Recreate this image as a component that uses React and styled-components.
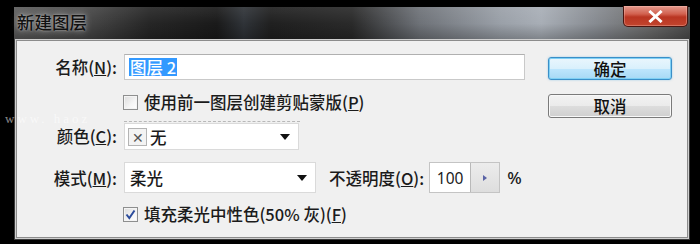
import React from "react";
import styled, { createGlobalStyle } from "styled-components";

const Global = createGlobalStyle`
  html, body { margin: 0; padding: 0; background: #000; }
  body { width: 700px; height: 244px; overflow: hidden; font-family: "Noto Sans CJK SC", "Noto Sans", sans-serif; }
`;

const Window = styled.div`
  position: relative;
  margin: 7px 0 0 14px;
  width: 676px;
  background: #3a3a3a;
  display: flex;
  flex-direction: column;
`;

const TitleBar = styled.div`
  height: 33px;
  display: flex;
  align-items: flex-start;
  justify-content: space-between;
  background:
    linear-gradient(180deg, rgba(255,255,255,0.08) 0%, rgba(0,0,0,0) 50%, rgba(0,0,0,0.25) 100%),
    linear-gradient(90deg, #5c5c5c 0%, #4a4a4a 10%, #262626 20%, #1a1a1a 30%, #2f3338 34%, #202020 38%, #2a2a2a 50%, #6e7278 60%, #9aa0a8 72%, #a8aeb6 78%, #878b91 86%, #6a6a6a 94%, #4c4c4c 100%);
`;

const Title = styled.div`
  margin: 4px 0 0 3px;
  font-size: 17.5px;
  font-weight: 500;
  line-height: 22px;
  color: #111;
  text-shadow: 0 0 6px rgba(210,210,210,0.75), 0 0 2px rgba(220,220,220,0.6);
`;

const CloseBtn = styled.div`
  margin: -1px 2px 0 0;
  width: 63px;
  height: 20px;
  border: 1px solid #4a1510;
  border-top: none;
  border-radius: 0 0 5px 5px;
  background: linear-gradient(180deg, #e39a8e 0%, #d2614f 40%, #b93522 55%, #c2452e 100%);
  box-shadow: inset 0 0 0 1px rgba(255,200,190,0.35);
  display: flex;
  align-items: center;
  justify-content: center;
`;

const Panel = styled.div`
  margin: 0 2px 2px;
  background: #f0f0f0;
  border: 1px solid #8c8c8c;
  box-shadow: 0 0 0 1px #cfcfcf;
  display: flex;
  padding-bottom: 13px;
`;

const Form = styled.div`
  width: 508px;
  display: flex;
  flex-direction: column;
`;

const Row = styled.div`
  display: flex;
  align-items: center;
  margin-top: ${(p) => p.$mt}px;
  height: ${(p) => p.$h}px;
  font-size: 16.5px;
  font-weight: 500;
  color: #1b1b1b;
`;

const Label = styled.div`
  width: 100px;
  text-align: right;
  margin-right: 7px;
  white-space: nowrap;
  line-height: 20px;
  flex: none;
`;

const TextInput = styled.div`
  width: 401px;
  height: 26px;
  box-sizing: border-box;
  background: #fff;
  border: 1px solid #c9c9c9;
  border-top-color: #b0b0b0;
  display: flex;
  align-items: center;
  padding-left: 4px;
`;

const Selected = styled.span`
  background: #3399ff;
  color: #fff;
  line-height: 18px;
  padding: 0 1px;
`;

const CheckLine = styled.label`
  display: flex;
  align-items: center;
  margin-left: 106px;
  line-height: 20px;
  white-space: nowrap;
`;

const Box = styled.span`
  width: 15px;
  height: 15px;
  box-sizing: border-box;
  border: 1px solid #8e8f8f;
  background: linear-gradient(135deg, #dcdcdc 0%, #f5f5f5 60%, #fff 100%);
  box-shadow: inset 0 0 0 1px #f4f4f4;
  margin-right: 6px;
  display: flex;
  align-items: center;
  justify-content: center;
  flex: none;
`;

const DashWrap = styled.div`
  border-top: 1px dashed #b8b8b8;
  padding-top: 1px;
  width: 176px;
`;

const Select = styled.div`
  width: ${(p) => p.$w}px;
  height: ${(p) => p.$h}px;
  box-sizing: border-box;
  background: #fff;
  border: 1px solid #dadada;
  display: flex;
  align-items: center;
  padding: 0 8px 0 ${(p) => p.$pl}px;
  flex: none;
`;

const SelectText = styled.span`
  flex: 1;
  line-height: 20px;
`;

const Arrow = styled.span`
  width: 0;
  height: 0;
  border-left: 5px solid transparent;
  border-right: 5px solid transparent;
  border-top: 6px solid #111;
`;

const Swatch = styled.span`
  width: 19px;
  height: 18px;
  box-sizing: border-box;
  border: 1px solid #b4b4b4;
  background: #f3f3f3;
  color: #555;
  font-size: 14px;
  font-weight: 400;
  display: flex;
  align-items: center;
  justify-content: center;
  margin-right: 3px;
  line-height: 1;
`;

const OpacityLabel = styled.span`
  margin-left: 13px;
  margin-right: 5px;
  white-space: nowrap;
  line-height: 20px;
`;

const Spin = styled.div`
  display: flex;
  height: 31px;
  width: 71px;
  box-sizing: border-box;
  border: 1px solid #c4c4c4;
  background: #fff;
  flex: none;
`;

const SpinValue = styled.div`
  width: 40px;
  display: flex;
  align-items: center;
  justify-content: center;
  font-size: 15.5px;
  font-weight: 400;
  font-family: "Noto Sans", sans-serif;
`;

const SpinBtn = styled.div`
  flex: 1;
  border-left: 1px solid #b9b9b9;
  background: linear-gradient(180deg, #ececec 0%, #dedede 100%);
  display: flex;
  align-items: center;
  justify-content: center;
`;

const SmallTri = styled.span`
  width: 0;
  height: 0;
  border-top: 3px solid transparent;
  border-bottom: 3px solid transparent;
  border-left: 4px solid #5a63a6;
`;

const Percent = styled.span`
  margin-left: 7px;
  font-family: "Noto Sans", sans-serif;
  font-size: 17px;
`;

const Buttons = styled.div`
  margin-left: 23px;
  width: 124px;
  display: flex;
  flex-direction: column;
`;

const Button = styled.div`
  margin-top: ${(p) => p.$mt}px;
  height: ${(p) => p.$h}px;
  box-sizing: border-box;
  border-radius: 3px;
  border: 1px solid ${(p) => (p.$primary ? "#3a8fc8" : "#7a7a7a")};
  box-shadow: ${(p) =>
    p.$primary
      ? "inset 0 0 0 1px #7fd0f5, 0 0 2px rgba(60,160,220,0.5)"
      : "inset 0 0 0 1px #f8f8f8"};
  background: ${(p) =>
    p.$primary
      ? "linear-gradient(180deg, #eaf6fd 0%, #d9f0fc 50%, #bee6fd 51%, #a7d9f5 100%)"
      : "linear-gradient(180deg, #f2f2f2 0%, #ebebeb 50%, #dddddd 51%, #cfcfcf 100%)"};
  display: flex;
  align-items: center;
  justify-content: center;
  font-size: 16.5px;
  font-weight: 500;
  color: #111;
  line-height: 20px;
`;

const Watermark = styled.div`
  position: absolute;
  left: -9px;
  top: 107px;
  font-family: "Liberation Serif", serif;
  font-size: 13px;
  line-height: 9px;
  letter-spacing: 3px;
  color: rgba(255, 255, 255, 0.55);
  pointer-events: none;
`;

export default function App() {
  return (
    <>
      <Global />
      <Window>
        <TitleBar>
          <Title>新建图层</Title>
          <CloseBtn>
            <svg width="15" height="13" viewBox="0 0 15 13">
              <path d="M2.5 2 L12.5 11 M12.5 2 L2.5 11" stroke="#fff" strokeWidth="3" strokeLinecap="square" />
            </svg>
          </CloseBtn>
        </TitleBar>
        <Panel>
          <Form>
            <Row $mt={13} $h={26}>
              <Label>名称(<u>N</u>):</Label>
              <TextInput>
                <Selected>图层 2</Selected>
              </TextInput>
            </Row>
            <Row $mt={12} $h={20}>
              <CheckLine>
                <Box />
                使用前一图层创建剪贴蒙版(<u>P</u>)
              </CheckLine>
            </Row>
            <Row $mt={9} $h={29}>
              <Label>颜色(<u>C</u>):</Label>
              <DashWrap>
                <Select $w={175} $h={27} $pl={3}>
                  <Swatch>✕</Swatch>
                  <SelectText>无</SelectText>
                  <Arrow />
                </Select>
              </DashWrap>
            </Row>
            <Row $mt={12} $h={31}>
              <Label>模式(<u>M</u>):</Label>
              <Select $w={192} $h={31} $pl={5}>
                <SelectText>柔光</SelectText>
                <Arrow />
              </Select>
              <OpacityLabel>不透明度(<u>O</u>):</OpacityLabel>
              <Spin>
                <SpinValue>100</SpinValue>
                <SpinBtn>
                  <SmallTri />
                </SpinBtn>
              </Spin>
              <Percent>%</Percent>
            </Row>
            <Row $mt={11} $h={20}>
              <CheckLine>
                <Box>
                  <svg width="11" height="11" viewBox="0 0 11 11">
                    <path d="M1.5 5.5 L4.3 9 L9.5 1.5" fill="none" stroke="#2c4c9c" strokeWidth="2" />
                  </svg>
                </Box>
                填充柔光中性色(50% 灰)(<u>F</u>)
              </CheckLine>
            </Row>
          </Form>
          <Buttons>
            <Button $primary $mt={16} $h={23}>确定</Button>
            <Button $mt={14} $h={24}>取消</Button>
          </Buttons>
        </Panel>
        <Watermark>www. haoz</Watermark>
      </Window>
    </>
  );
}
